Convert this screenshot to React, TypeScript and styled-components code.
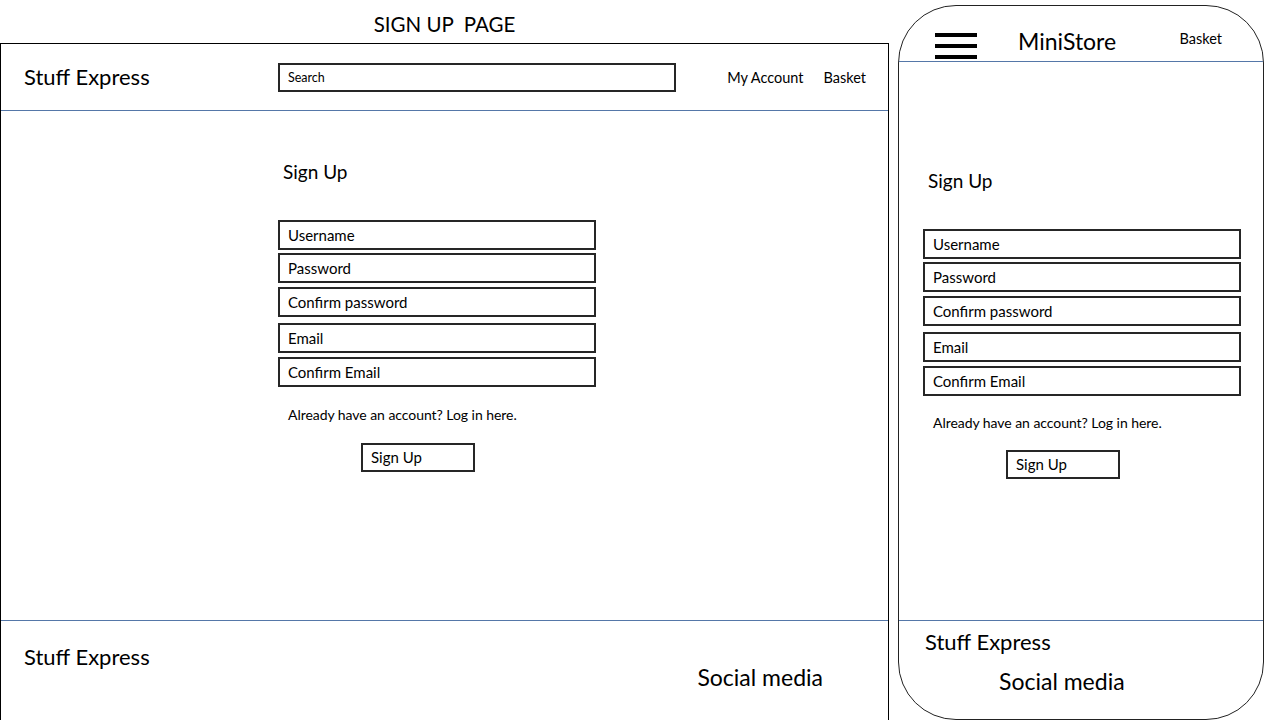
import styled, { createGlobalStyle } from "styled-components";

const GlobalStyle = createGlobalStyle`
  html, body {
    margin: 0;
    padding: 0;
    background: #fff;
  }
  body {
    font-family: Lato, "Open Sans", sans-serif;
    color: #000;
    overflow: hidden;
  }
  * {
    box-sizing: border-box;
  }
`;

const Canvas = styled.div`
  display: flex;
  align-items: flex-start;
  width: 1280px;
  height: 720px;
  overflow: hidden;
`;

const DesktopColumn = styled.div`
  width: 889px;
  display: flex;
  flex-direction: column;
`;

const PageTitle = styled.div`
  height: 43px;
  padding-top: 4px;
  display: flex;
  align-items: center;
  justify-content: center;
  font-size: 20.5px;
  white-space: pre;
`;

const DesktopFrame = styled.div`
  height: 680px;
  border: 1px solid #000;
  border-bottom: none;
  display: flex;
  flex-direction: column;
`;

const TopBar = styled.div`
  height: 67px;
  border-bottom: 1px solid #5577a8;
  display: flex;
  align-items: center;
  padding: 0 22px 0 23px;
`;

const Brand = styled.div<{ $width?: number }>`
  font-size: 22px;
  line-height: 26px;
  width: ${(p) => (p.$width ? `${p.$width}px` : "auto")};
`;

const SearchBox = styled.div`
  width: 398px;
  height: 29px;
  border: 2px solid #262626;
  display: flex;
  align-items: center;
  padding-left: 8px;
  font-size: 12.5px;
`;

const Nav = styled.nav`
  margin-left: auto;
  display: flex;
  gap: 20px;
  font-size: 14.5px;
`;

const DesktopMain = styled.main`
  height: 510px;
  padding: 49px 0 0 277px;
  border-bottom: 1px solid #5577a8;
  flex-shrink: 0;
`;

const MobileMain = styled.main`
  height: 559px;
  padding: 107px 0 0 24px;
  border-bottom: 1px solid #5577a8;
  flex-shrink: 0;
`;

const FormTitle = styled.h2`
  margin: 0 0 36px 5px;
  font-size: 19px;
  line-height: 24px;
  font-weight: normal;
`;

const Field = styled.div<{ $gap: number }>`
  width: 318px;
  height: 30px;
  margin-top: ${(p) => p.$gap}px;
  border: 2px solid #262626;
  display: flex;
  align-items: center;
  padding: 0 0 1px 8px;
  font-size: 15px;
`;

const LoginHint = styled.p<{ $gap: number }>`
  margin: ${(p) => p.$gap}px 0 0 10px;
  font-size: 14px;
  line-height: 18px;
  letter-spacing: -0.05px;
`;

const SubmitButton = styled.div<{ $gap: number }>`
  margin: ${(p) => p.$gap}px 0 0 83px;
  width: 114px;
  height: 29px;
  border: 2px solid #262626;
  display: flex;
  align-items: center;
  padding: 0 0 1px 8px;
  font-size: 15px;
`;

const DesktopFooter = styled.footer`
  display: flex;
  align-items: flex-start;
  padding: 23px 65px 0 23px;
`;

const SocialText = styled.div<{ $top: number; $left?: number }>`
  font-size: 23px;
  line-height: 26px;
  margin-top: ${(p) => p.$top}px;
  margin-left: ${(p) => (p.$left !== undefined ? `${p.$left}px` : "auto")};
`;

const Phone = styled.div`
  margin: 5px 0 0 9px;
  width: 366px;
  height: 715px;
  border: 1px solid #222;
  border-radius: 58px;
  overflow: hidden;
  display: flex;
  flex-direction: column;
`;

const PhoneBar = styled.div`
  height: 56px;
  border-bottom: 1px solid #5577a8;
  display: flex;
  align-items: flex-start;
  padding: 0 41px 0 36px;
  flex-shrink: 0;
`;

const Burger = styled.div`
  margin-top: 27px;
  width: 42px;
  display: flex;
  flex-direction: column;
  gap: 7px;
`;

const BurgerLine = styled.span`
  display: block;
  height: 4px;
  background: #000;
`;

const PhoneBrand = styled.div`
  margin: 22px 0 0 41px;
  font-size: 23px;
  line-height: 26px;
`;

const PhoneBasket = styled.div`
  margin: 24px 0 0 auto;
  font-size: 14.5px;
  line-height: 18px;
`;

const PhoneFooter = styled.footer`
  padding: 8px 0 0 26px;
`;

const fields = [
  { label: "Username", gap: 0 },
  { label: "Password", gap: 3 },
  { label: "Confirm password", gap: 4 },
  { label: "Email", gap: 6 },
  { label: "Confirm Email", gap: 4 },
];

function SignUpForm({ spacing }: { spacing: number }) {
  return (
    <>
      <FormTitle>Sign Up</FormTitle>
      {fields.map((f) => (
        <Field key={f.label} $gap={f.gap}>
          {f.label}
        </Field>
      ))}
      <LoginHint $gap={spacing}>Already have an account? Log in here.</LoginHint>
      <SubmitButton $gap={spacing}>Sign Up</SubmitButton>
    </>
  );
}

export default function App() {
  return (
    <>
      <GlobalStyle />
      <Canvas>
        <DesktopColumn>
          <PageTitle>SIGN UP  PAGE</PageTitle>
          <DesktopFrame>
            <TopBar>
              <Brand $width={254}>Stuff Express</Brand>
              <SearchBox>Search</SearchBox>
              <Nav>
                <span>My Account</span>
                <span>Basket</span>
              </Nav>
            </TopBar>
            <DesktopMain>
              <SignUpForm spacing={19} />
            </DesktopMain>
            <DesktopFooter>
              <Brand>Stuff Express</Brand>
              <SocialText $top={20}>Social media</SocialText>
            </DesktopFooter>
          </DesktopFrame>
        </DesktopColumn>

        <Phone>
          <PhoneBar>
            <Burger>
              <BurgerLine />
              <BurgerLine />
              <BurgerLine />
            </Burger>
            <PhoneBrand>MiniStore</PhoneBrand>
            <PhoneBasket>Basket</PhoneBasket>
          </PhoneBar>
          <MobileMain>
            <SignUpForm spacing={18} />
          </MobileMain>
          <PhoneFooter>
            <Brand>Stuff Express</Brand>
            <SocialText $top={13} $left={74}>
              Social media
            </SocialText>
          </PhoneFooter>
        </Phone>
      </Canvas>
    </>
  );
}
